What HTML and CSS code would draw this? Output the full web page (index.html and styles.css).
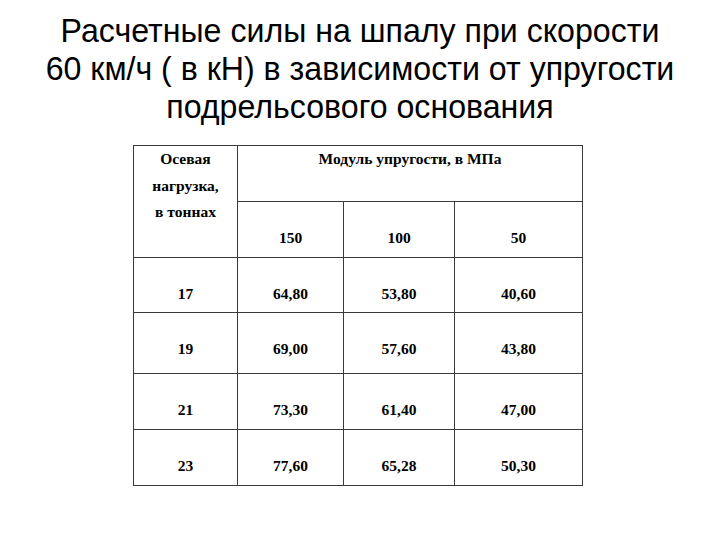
FILE: index.html
```html
<!DOCTYPE html>
<html lang="ru">
<head>
<meta charset="utf-8">
<link rel="stylesheet" href="styles.css">
</head>
<body>
<div class="slide">
  <h1 class="title">Расчетные силы на шпалу при скорости<br>60 км/ч ( в кН) в зависимости от упругости<br>подрельсового основания</h1>
  <table class="data">
    <colgroup>
      <col class="c1"><col class="c2"><col class="c3"><col class="c4">
    </colgroup>
    <tr class="h1">
      <td rowspan="2" class="head">Осевая<br>нагрузка,<br>в тоннах</td>
      <td colspan="3" class="head">Модуль упругости, в МПа</td>
    </tr>
    <tr class="h2"><td>150</td><td>100</td><td>50</td></tr>
    <tr class="r1"><td>17</td><td>64,80</td><td>53,80</td><td>40,60</td></tr>
    <tr class="r2"><td>19</td><td>69,00</td><td>57,60</td><td>43,80</td></tr>
    <tr class="r3"><td>21</td><td>73,30</td><td>61,40</td><td>47,00</td></tr>
    <tr class="r4"><td>23</td><td>77,60</td><td>65,28</td><td>50,30</td></tr>
  </table>
</div>
</body>
</html>
```
FILE: styles.css
```css
html, body {
  margin: 0;
  padding: 0;
  background: #fff;
}
.slide {
  width: 720px;
  height: 540px;
  overflow: hidden;
  padding-top: 11px;
  box-sizing: border-box;
}
.title {
  margin: 0;
  font-family: "Liberation Sans", Arial, sans-serif;
  font-weight: normal;
  font-size: 34px;
  line-height: 38px;
  color: #000;
  text-align: center;
  transform: scaleX(0.945);
}
.data {
  margin: 20px 0 0 133px;
  width: 449px;
  border-collapse: collapse;
  table-layout: fixed;
  font-family: "Liberation Serif", "Times New Roman", serif;
  font-weight: bold;
  font-size: 15.5px;
  line-height: 26.5px;
  color: #000;
}
.c1 { width: 104px; }
.c2 { width: 106px; }
.c3 { width: 111px; }
.c4 { width: 128px; }
.data td {
  border: 1px solid #3a3a3a;
  padding: 23px 0 0 0;
  text-align: center;
  vertical-align: top;
  box-sizing: border-box;
}
.data td.head {
  padding-top: 0;
}
.head-text {
  display: block;
}
.h1 td { height: 56px; }
.h2 td { height: 56px; }
.r1 td { height: 55px; }
.r2 td { height: 61px; }
.r3 td { height: 56px; }
.r4 td { height: 56px; }
```
